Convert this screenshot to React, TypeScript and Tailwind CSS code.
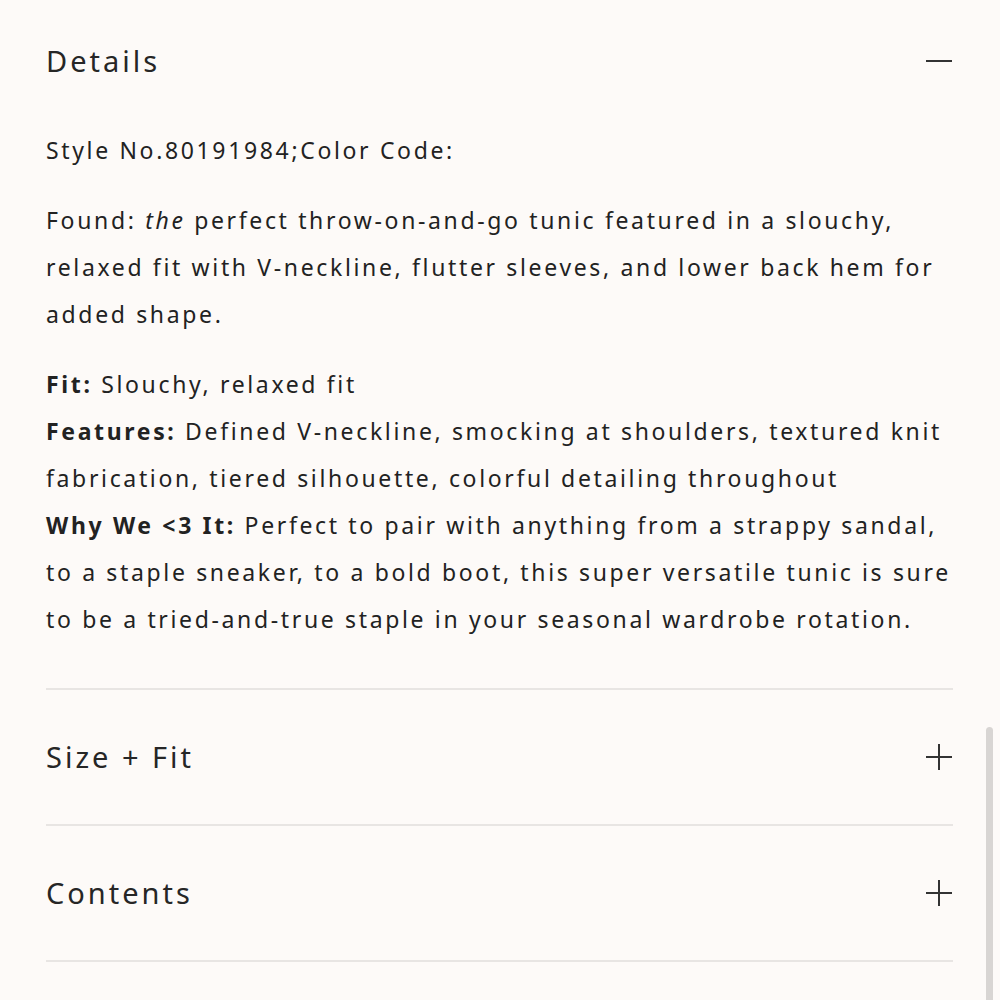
import React from "react";

const font = { fontFamily: '"Noto Sans", "Open Sans", sans-serif' };

function Minus() {
  return (
    <svg width="28" height="4" viewBox="0 0 28 4" className="block">
      <line x1="1" y1="2" x2="27" y2="2" stroke="#333" strokeWidth="2" />
    </svg>
  );
}

function Plus() {
  return (
    <svg width="28" height="28" viewBox="0 0 28 28" className="block">
      <line x1="1" y1="14" x2="27" y2="14" stroke="#333" strokeWidth="2" />
      <line x1="14" y1="1" x2="14" y2="27" stroke="#333" strokeWidth="2" />
    </svg>
  );
}

export default function App() {
  return (
    <div className="relative w-[1000px] h-[1000px] overflow-hidden bg-[#fdfaf8] text-[#222]" style={font}>
      <div className="pl-[46px] pr-[47px]">
        <div className="h-[122px] flex items-center justify-between">
          <span className="text-[29px] tracking-[3px] text-[#262626]">Details</span>
          <Minus />
        </div>
        <div className="mt-[5px] text-[23px] leading-[47px] tracking-[2.65px]">
          <p>Style No.80191984;Color Code:</p>
          <p className="mt-[23px]">
            Found: <em>the</em> perfect throw-on-and-go tunic featured in a slouchy, relaxed fit with V-neckline, flutter sleeves, and lower back hem for added shape.
          </p>
          <p className="mt-[23px]">
            <b className="font-bold">Fit:</b> Slouchy, relaxed fit
            <br />
            <b className="font-bold">Features:</b> Defined V-neckline, smocking at shoulders, textured knit fabrication, tiered silhouette, colorful detailing throughout
            <br />
            <b className="font-bold">Why We &lt;3 It:</b> Perfect to pair with anything from a strappy sandal, to a staple sneaker, to a bold boot, this super versatile tunic is sure to be a tried-and-true staple in your seasonal wardrobe rotation.
          </p>
        </div>
        <div className="mt-[45px] h-[2px] bg-[#e8e5e3]" />
        <div className="h-[134px] flex items-center justify-between">
          <span className="text-[29px] tracking-[3px] text-[#262626]">Size + Fit</span>
          <Plus />
        </div>
        <div className="h-[2px] bg-[#e8e5e3]" />
        <div className="h-[134px] flex items-center justify-between">
          <span className="text-[29px] tracking-[3px] text-[#262626]">Contents</span>
          <Plus />
        </div>
        <div className="h-[2px] bg-[#e8e5e3]" />
      </div>
      <div className="absolute left-[986px] top-[727px] w-[7px] h-[300px] rounded-full bg-[#d8d5d3]" />
    </div>
  );
}
